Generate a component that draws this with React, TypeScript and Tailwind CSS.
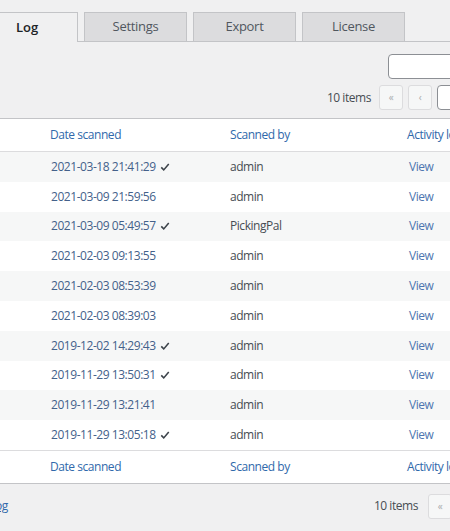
import React from 'react';

const rows = [
  { date: '2021-03-18 21:41:29', ok: true, by: 'admin' },
  { date: '2021-03-09 21:59:56', ok: false, by: 'admin' },
  { date: '2021-03-09 05:49:57', ok: true, by: 'PickingPal' },
  { date: '2021-02-03 09:13:55', ok: false, by: 'admin' },
  { date: '2021-02-03 08:53:39', ok: false, by: 'admin' },
  { date: '2021-02-03 08:39:03', ok: false, by: 'admin' },
  { date: '2019-12-02 14:29:43', ok: true, by: 'admin' },
  { date: '2019-11-29 13:50:31', ok: true, by: 'admin' },
  { date: '2019-11-29 13:21:41', ok: false, by: 'admin' },
  { date: '2019-11-29 13:05:18', ok: true, by: 'admin' },
];

function Check() {
  return (
    <svg width="10" height="10" viewBox="0 0 12 12" className="ml-[4px] inline-block">
      <path d="M1.5 6.5 L4.5 9.5 L10.5 2.5" fill="none" stroke="#3c434a" strokeWidth="1.9" />
    </svg>
  );
}

function PageButton({ label }: { label: string }) {
  return (
    <span className="flex h-[25px] w-[24px] items-center justify-center rounded-[3px] border border-[#dcdcde] bg-[#f6f7f7] text-[10px] text-[#a7aaad]">
      {label}
    </span>
  );
}

function HeadRow({ border }: { border: 'top' | 'bottom' }) {
  return (
    <div
      className={`grid h-[33px] grid-cols-[40px_180px_177px_1fr] items-center text-[#3069ab] ${
        border === 'bottom' ? 'border-b border-[#dcdcde]' : 'border-t border-[#dcdcde]'
      }`}
    >
      <span />
      <span className="pl-[10px]">Date scanned</span>
      <span className="pl-[10px]">Scanned by</span>
      <span className="pl-[10px]">Activity log</span>
    </div>
  );
}

export default function App() {
  return (
    <div
      className="h-[531px] w-[450px] overflow-hidden bg-[#f0f0f1] text-[12px] tracking-[-0.45px] text-[#474d53]"
      style={{ fontFamily: '"Segoe UI", "Open Sans", "Noto Sans", sans-serif' }}
    >
      {/* Tabs */}
      <div className="flex w-[575px] items-end border-b border-[#c3c4c7] pt-[12px] tracking-normal">
        <div className="-mb-px ml-[-1px] flex h-[30px] w-[79px] items-center border-r border-t border-[#c3c4c7] bg-[#f0f0f1] pl-[17px] text-[13px] font-semibold text-[#1d2327]">
          Log
        </div>
        {['Settings', 'Export', 'License'].map((t) => (
          <div
            key={t}
            className="ml-[6px] flex h-[29px] w-[103px] items-center justify-center border border-b-0 border-[#c3c4c7] bg-[#dcdcde] text-[13px] tracking-[-0.3px] text-[#50575e]"
          >
            {t}
          </div>
        ))}
      </div>

      {/* Search + pagination */}
      <div className="flex w-[575px] flex-col items-end pt-[12px]">
        <div className="h-[25px] w-[187px] rounded-[4px] border border-[#8c8f94] bg-white" />
        <div className="mt-[6px] flex items-center">
          <span className="mr-[8px]">10 items</span>
          <PageButton label="«" />
          <span className="w-[5px]" />
          <PageButton label="‹" />
          <span className="ml-[5px] h-[25px] w-[38px] rounded-[4px] border border-[#8c8f94] bg-white" />
          <span className="w-[100px] pl-[6px]">of 1</span>
        </div>
      </div>

      {/* Table */}
      <div className="mt-[8px] w-[575px] border-y border-[#c3c4c7] bg-white">
        <HeadRow border="bottom" />
        {rows.map((r, i) => (
          <div
            key={r.date}
            className={`grid h-[29.8px] grid-cols-[40px_180px_177px_1fr] items-center ${
              i % 2 === 0 ? 'bg-[#f6f7f7]' : 'bg-white'
            }`}
          >
            <span />
            <span className="flex items-center pl-[11px] text-[#44618a]">
              {r.date}
              {r.ok && <Check />}
            </span>
            <span className="pl-[10px]">{r.by}</span>
            <span className="pl-[12px] text-[#4d76b0]">View</span>
          </div>
        ))}
        <HeadRow border="top" />
      </div>

      {/* Bottom nav */}
      <div className="flex w-[575px] items-center justify-between pt-[10px]">
        <span className="ml-[-37px] text-[#3069ab] underline">Clear log</span>
        <div className="flex items-center">
          <span className="mr-[10px]">10 items</span>
          <PageButton label="«" />
          <span className="w-[6px]" />
          <PageButton label="‹" />
          <span className="w-[93px] pl-[6px]">1 of 1</span>
        </div>
      </div>
    </div>
  );
}
